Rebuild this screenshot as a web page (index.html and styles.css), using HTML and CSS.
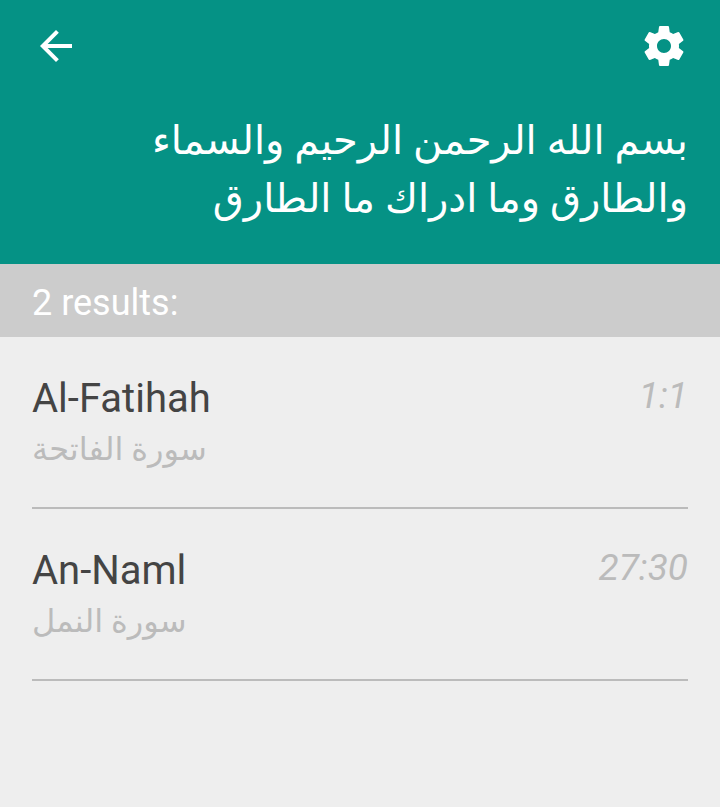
FILE: index.html
```html
<!DOCTYPE html>
<html lang="en">
<head>
    <meta charset="UTF-8">
    <meta name="viewport" content="width=device-width, initial-scale=1.0">
    <title>Search results</title>
    <link rel="stylesheet" href="styles.css">
</head>
<body>

<header class="header">
    <div class="toolbar">
        <button type="button" class="icon-btn" aria-label="Back">
            <svg width="48" height="48" viewBox="0 0 24 24" fill="currentColor">
                <path d="M20 11H7.83l5.59-5.59L12 4l-8 8 8 8 1.41-1.41L7.83 13H20v-2z"/>
            </svg>
        </button>
        <button type="button" class="icon-btn" aria-label="Settings">
            <svg width="48" height="48" viewBox="0 0 24 24" fill="currentColor">
                <path d="M19.43 12.98c.04-.32.07-.64.07-.98s-.03-.66-.07-.98l2.11-1.65c.19-.15.24-.42.12-.64l-2-3.46c-.12-.22-.39-.3-.61-.22l-2.49 1c-.52-.4-1.08-.73-1.69-.98l-.38-2.65C14.46 2.18 14.25 2 14 2h-4c-.25 0-.46.18-.49.42l-.38 2.65c-.61.25-1.17.59-1.69.98l-2.49-1c-.23-.09-.49 0-.61.22l-2 3.46c-.13.22-.07.49.12.64l2.11 1.65c-.04.32-.07.65-.07.98s.03.66.07.98l-2.11 1.65c-.19.15-.24.42-.12.64l2 3.46c.12.22.39.3.61.22l2.49-1c.52.4 1.08.73 1.69.98l.38 2.65c.03.24.24.42.49.42h4c.25 0 .46-.18.49-.42l.38-2.65c.61-.25 1.17-.59 1.69-.98l2.49 1c.23.09.49 0 .61-.22l2-3.46c.12-.22.07-.49-.12-.64l-2.11-1.65zM12 15.5c-1.93 0-3.5-1.57-3.5-3.5s1.57-3.5 3.5-3.5 3.5 1.57 3.5 3.5-1.57 3.5-3.5 3.5z"/>
            </svg>
        </button>
    </div>
    <p class="query" lang="ar" dir="rtl">بسم الله الرحمن الرحيم والسماء والطارق وما ادراك ما الطارق</p>
</header>

<p class="count">2 results:</p>

<ul class="results">
    <li class="result">
        <div class="surah">
            <h2 class="name">Al-Fatihah</h2>
            <p class="arabic" lang="ar">سورة الفاتحة</p>
        </div>
        <span class="ayah">1:1</span>
    </li>
    <li class="result">
        <div class="surah">
            <h2 class="name">An-Naml</h2>
            <p class="arabic" lang="ar">سورة النمل</p>
        </div>
        <span class="ayah">27:30</span>
    </li>
</ul>

</body>
</html>
```
FILE: styles.css
```css
* {
    box-sizing: border-box;
}
body {
    margin: 0;
    font-family: Roboto, "DejaVu Sans", sans-serif;
    background-color: #eeeeee;
}
h2, p, ul {
    margin: 0;
    padding: 0;
}
.header {
    padding: 22px 32px 36px;
    background-color: #059285;
    color: white;
}
.toolbar {
    display: flex;
    justify-content: space-between;
    margin-bottom: 42px;
}
.icon-btn {
    width: 48px;
    height: 48px;
    padding: 0;
    border: none;
    background: none;
    color: white;
    cursor: pointer;
}
.icon-btn svg {
    display: block;
}
.query {
    font-size: 40px;
    line-height: 58px;
}
.count {
    padding: 19px 32px 13px;
    background-color: #cccccc;
    color: white;
    font-size: 36px;
    line-height: 41px;
}
.results {
    padding: 0 32px;
    list-style: none;
}
.result {
    display: flex;
    justify-content: space-between;
    align-items: flex-start;
    padding: 36px 0 34px;
    border-bottom: 2px solid #bbbbbb;
}
.name {
    color: #444444;
    font-size: 40px;
    font-weight: normal;
    line-height: 52px;
}
.arabic {
    color: #bbbbbb;
    font-size: 32px;
    line-height: 48px;
}
.ayah {
    color: #bbbbbb;
    font-size: 37px;
    font-style: italic;
    line-height: 46px;
}
```
